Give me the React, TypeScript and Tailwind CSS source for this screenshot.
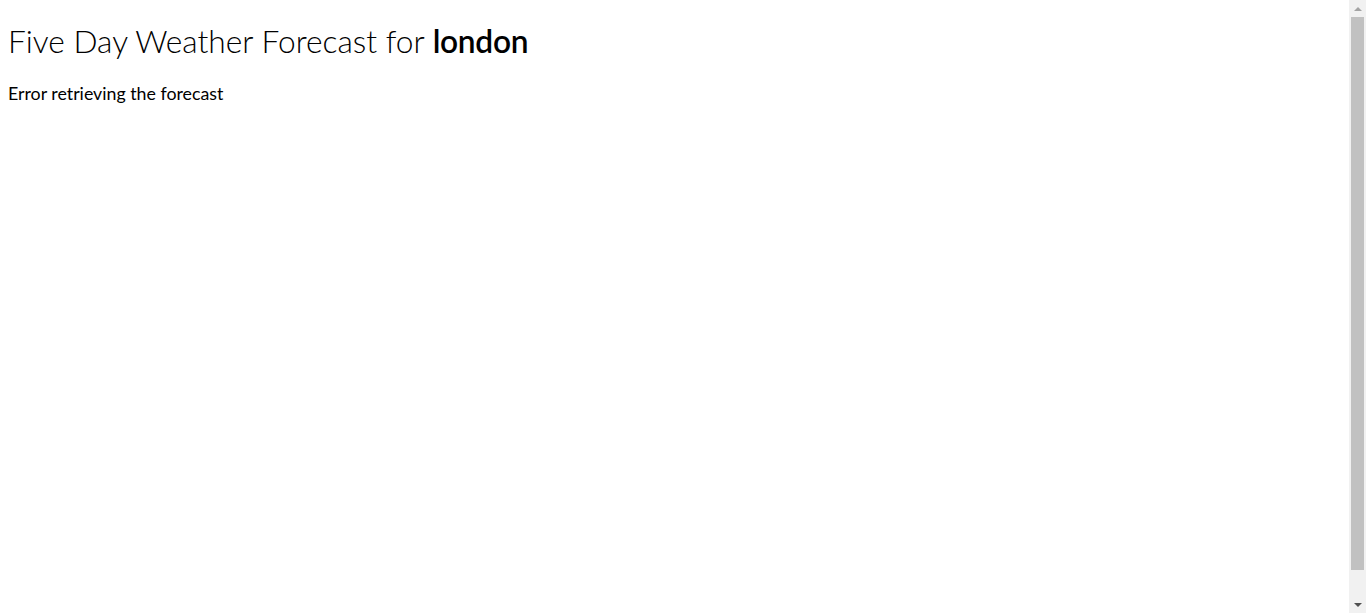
import React from 'react'

export default function App() {
  return (
    <div className="relative min-h-[613px] bg-white p-2 text-black" style={{ fontFamily: 'Lato, sans-serif' }}>
      <h1 className="mt-[14px] mb-[22px] text-[31.7px] font-light leading-[38px]">
        Five Day Weather Forecast for <span className="font-semibold tracking-[-0.3px]">london</span>
      </h1>
      <p className="text-[17.8px] leading-[22px]">Error retrieving the forecast</p>

      {/* browser scrollbar */}
      <div className="fixed top-0 right-0 flex h-[613px] w-[17px] flex-col bg-[#f1f1f1]">
        <div className="flex h-[17px] items-center justify-center">
          <div className="h-0 w-0 border-x-[4px] border-b-[4px] border-x-transparent border-b-[#a3a3a3]" />
        </div>
        <div className="mx-[2px] h-[553px] bg-[#c1c1c1]" />
        <div className="flex-1" />
        <div className="flex h-[17px] items-center justify-center">
          <div className="h-0 w-0 border-x-[4px] border-t-[4px] border-x-transparent border-t-[#505050]" />
        </div>
      </div>
    </div>
  )
}
